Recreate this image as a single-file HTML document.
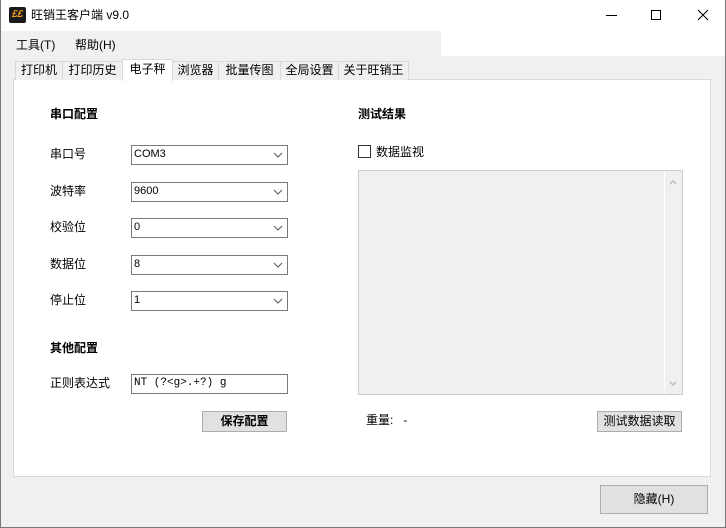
<!DOCTYPE html>
<html><head><meta charset="utf-8"><style>
*{margin:0;padding:0;box-sizing:border-box}
body{width:726px;height:528px;overflow:hidden;background:#f0f0f0;font-family:"Liberation Sans","Noto Sans CJK SC",sans-serif;font-size:12px;color:#000;position:relative}
.a{position:absolute;white-space:nowrap}
.combo{position:absolute;background:#fff;border:1px solid #7a7a7a;height:20px;left:131px;width:157px;font-size:11px;line-height:17px;padding-left:2px}
.combo svg{position:absolute;right:4px;top:6px}
.tab{position:absolute;top:61px;height:19px;border:1px solid #d9d9d9;border-bottom:none;background:#f0f0f0;font-size:12px;line-height:17px;text-align:center}
.btn{position:absolute;background:#e1e1e1;border:1px solid #adadad;text-align:center}
b{font-weight:bold}
</style></head><body>
<div class="a" style="left:0;top:0;width:726px;height:31px;background:#fff"></div>
<div class="a" style="left:441px;top:31px;width:285px;height:25px;background:#fff"></div>
<div class="a" style="left:9px;top:7px;width:17px;height:16px;background:#1a1a1a;border-radius:2px;color:#f0a020;font-size:10px;font-style:italic;line-height:16px;text-align:center;font-weight:bold">££</div>
<div class="a" style="left:31px;top:6px;font-size:12px">旺销王客户端 v9.0</div>
<div class="a" style="left:606px;top:15px;width:11px;height:1px;background:#000"></div>
<div class="a" style="left:651px;top:10px;width:10px;height:10px;border:1px solid #000"></div>
<svg class="a" style="left:697px;top:9px" width="12" height="12"><path d="M1 1L11 11M11 1L1 11" stroke="#000" stroke-width="1"/></svg>
<div class="a" style="left:16px;top:36px">工具(T)</div>
<div class="a" style="left:75px;top:36px">帮助(H)</div>
<div class="a" style="left:0;top:0;width:1px;height:528px;background:#777"></div>
<div class="a" style="left:725px;top:0;width:1px;height:528px;background:#777"></div>
<div class="a" style="left:0;top:527px;width:726px;height:1px;background:#777"></div>

<div class="a" style="left:13px;top:79px;width:698px;height:398px;background:#fff;border:1px solid #d9d9d9"></div>
<div class="tab" style="left:15px;width:48px">打印机</div>
<div class="tab" style="left:62px;width:61px">打印历史</div>
<div class="tab" style="left:172px;width:47px">浏览器</div>
<div class="tab" style="left:218px;width:63px">批量传图</div>
<div class="tab" style="left:280px;width:59px">全局设置</div>
<div class="tab" style="left:338px;width:71px">关于旺销王</div>
<div class="tab" style="left:122px;width:51px;top:59px;height:22px;background:#fff;line-height:18px;padding-bottom:2px">电子秤</div>

<div class="a" style="left:50px;top:105px"><b>串口配置</b></div>
<div class="a" style="left:50px;top:145px">串口号</div>
<div class="a" style="left:50px;top:182px">波特率</div>
<div class="a" style="left:50px;top:218px">校验位</div>
<div class="a" style="left:50px;top:255px">数据位</div>
<div class="a" style="left:50px;top:291px">停止位</div>
<div class="combo" style="top:145px">COM3<svg width="10" height="6"><path d="M1 1L5 5L9 1" stroke="#555" fill="none"/></svg></div>
<div class="combo" style="top:182px">9600<svg width="10" height="6"><path d="M1 1L5 5L9 1" stroke="#555" fill="none"/></svg></div>
<div class="combo" style="top:218px">0<svg width="10" height="6"><path d="M1 1L5 5L9 1" stroke="#555" fill="none"/></svg></div>
<div class="combo" style="top:255px">8<svg width="10" height="6"><path d="M1 1L5 5L9 1" stroke="#555" fill="none"/></svg></div>
<div class="combo" style="top:291px">1<svg width="10" height="6"><path d="M1 1L5 5L9 1" stroke="#555" fill="none"/></svg></div>
<div class="a" style="left:50px;top:339px"><b>其他配置</b></div>
<div class="a" style="left:50px;top:374px">正则表达式</div>
<div class="combo" style="top:374px;font-family:'Liberation Mono',monospace">NT (?&lt;g&gt;.+?) g</div>
<div class="btn" style="left:202px;top:411px;width:85px;height:21px;line-height:18px"><b>保存配置</b></div>

<div class="a" style="left:358px;top:105px"><b>测试结果</b></div>
<div class="a" style="left:358px;top:145px;width:13px;height:13px;border:1px solid #333;background:#fff"></div>
<div class="a" style="left:376px;top:143px">数据监视</div>
<div class="a" style="left:358px;top:170px;width:325px;height:225px;background:#f0f0f0;border:1px solid #ccc"></div>
<div class="a" style="left:664px;top:171px;width:1px;height:223px;background:#fff"></div>
<svg class="a" style="left:669px;top:179px" width="8" height="6"><path d="M1 5L4 2L7 5" stroke="#bbb" fill="none" stroke-width="1.5"/></svg>
<svg class="a" style="left:669px;top:381px" width="8" height="6"><path d="M1 1L4 4L7 1" stroke="#bbb" fill="none" stroke-width="1.5"/></svg>
<div class="a" style="left:366px;top:411px">重量:&nbsp;&nbsp; -</div>
<div class="btn" style="left:597px;top:411px;width:85px;height:21px;line-height:18px">测试数据读取</div>
<div class="btn" style="left:600px;top:485px;width:108px;height:29px;line-height:26px">隐藏(H)</div>
</body></html>
